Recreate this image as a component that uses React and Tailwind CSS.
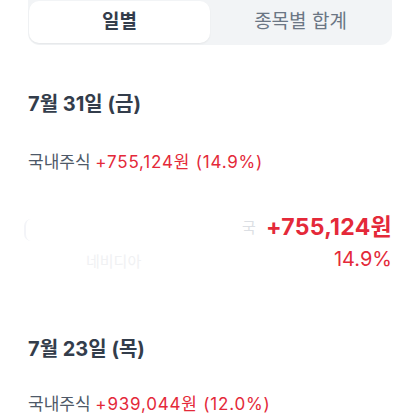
export default function App() {
  const font = { fontFamily: 'Inter, "Noto Sans CJK KR", "Noto Sans", sans-serif' };
  return (
    <div className="w-[420px] h-[420px] overflow-hidden bg-white" style={font}>
      <div className="px-[28px]">
        <div className="flex h-[45px] bg-[#f2f4f6] rounded-b-[12px] p-[1px] pb-[2px]">
          <div className="w-[181px] bg-white rounded-[10px] shadow-[0_1px_2px_rgba(0,0,0,0.06)] flex items-center justify-center text-[19px] font-bold text-[#333d4b]">
            일별
          </div>
          <div className="flex-1 flex items-center justify-center text-[19px] text-[#6b7684]">
            종목별 합계
          </div>
        </div>
      </div>

      <div className="px-[28px] pt-[43px]">
        <div className="text-[20px] font-bold text-[#333d4b] leading-[32px]">7월 31일 (금)</div>
        <div className="mt-[29px] text-[17px] leading-[26px] text-[#4e5968]">
          국내주식 <span className="text-[#e42939] tracking-[0.8px]">+755,124원 (14.9%)</span>
        </div>

        <div className="mt-[36px] flex justify-between">
          <div className="relative flex-1">
            <div className="absolute left-[-4px] top-[8px] w-[14px] h-[22px] rounded-full border-l-2 border-[#f3f4f8]"></div>
            <div className="absolute left-[214px] top-[6px] text-[15px] text-[#dcdfe4]">국</div>
            <div className="absolute left-[58px] top-[40px] text-[15px] text-[#f0f1f3]">네비디아</div>
          </div>
          <div className="flex flex-col items-end">
            <div className="text-[23px] font-bold text-[#e42939] leading-[32px] tracking-[0.3px]">+755,124원</div>
            <div className="text-[20px] text-[#e42939] leading-[30px] mt-[1px]">14.9%</div>
          </div>
        </div>

        <div className="mt-[59px] text-[20px] font-bold text-[#333d4b] leading-[32px]">7월 23일 (목)</div>
        <div className="mt-[26px] text-[17px] leading-[26px] text-[#4e5968]">
          국내주식 <span className="text-[#e42939] tracking-[0.8px]">+939,044원 (12.0%)</span>
        </div>
      </div>
    </div>
  );
}
